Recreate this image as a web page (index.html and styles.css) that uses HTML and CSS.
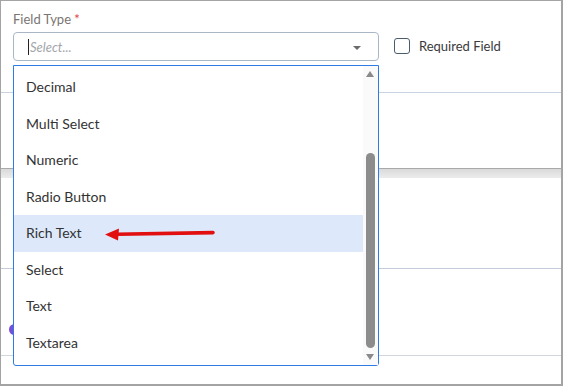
FILE: index.html
```html
<!doctype html>
<html lang="en">
<head>
    <meta charset="UTF-8">
    <title>Field Type</title>
    <link rel="stylesheet" href="styles.css">
</head>
<body>
    <div class="frame">
        <div class="field">
            <label class="label">Field Type <span class="req">*</span></label>
            <div class="row">
                <div class="select">
                    <span class="cursor"></span>
                    <span class="placeholder">Select...</span>
                    <span class="caret"></span>
                </div>
                <label class="check">
                    <span class="box"></span>
                    <span>Required Field</span>
                </label>
            </div>
        </div>
        <div class="section s1"></div>
        <div class="band"></div>
        <div class="section s2"></div>
        <div class="section s3"><span class="dot"></span></div>
        <div class="section s4"></div>

        <!-- open dropdown -->
        <div class="menu">
            <ul class="list">
                <li>Decimal</li>
                <li>Multi Select</li>
                <li>Numeric</li>
                <li>Radio Button</li>
                <li class="active">Rich Text</li>
                <li>Select</li>
                <li>Text</li>
                <li>Textarea</li>
            </ul>
            <div class="scroll">
                <span class="up"></span>
                <span class="thumb"></span>
                <span class="down"></span>
            </div>
        </div>

        <svg class="arrow" width="130" height="20" viewBox="0 0 130 20">
            <path d="M14 11.3 L110 9.6" stroke="#e10f0f" stroke-width="3.6" stroke-linecap="round" fill="none"/>
            <path d="M2 11.6 L16 5.5 L15 17.5 Z" fill="#e10f0f"/>
        </svg>
    </div>
</body>
</html>
```

FILE: styles.css
```css
* {
    margin: 0;
    padding: 0;
    box-sizing: border-box;
}
body {
    background: #fff;
    font-family: Lato, "Open Sans", sans-serif;
    color: #333;
}
.frame {
    position: relative;
    width: 563px;
    height: 386px;
    border: 1px solid #a4a4a4;
    border-right-width: 2px;
    border-bottom-width: 2px;
    overflow: hidden;
}
.field {
    height: 92px;
    padding: 10px 12px 0;
    border-bottom: 1px solid #c9d3df;
}
.label {
    display: block;
    font-size: 13px;
    line-height: 16px;
    color: #7a7572;
}
.req {
    color: #e0413b;
}
.row {
    display: flex;
    align-items: center;
    margin-top: 5px;
}
.select {
    position: relative;
    display: flex;
    align-items: center;
    width: 366px;
    height: 29px;
    border: 1px solid #a9b6c6;
    border-radius: 4px;
    padding-left: 14px;
}
.cursor {
    width: 1px;
    height: 16px;
    background: #222;
    margin-right: 1px;
}
.placeholder {
    font-size: 13px;
    font-style: italic;
    color: #a3a6aa;
}
.caret {
    position: absolute;
    right: 17px;
    top: 13px;
    border-left: 4px solid transparent;
    border-right: 4px solid transparent;
    border-top: 4px solid #6b6b6b;
}
.check {
    display: flex;
    align-items: center;
    gap: 9px;
    margin-left: 15px;
    margin-top: -2px;
    font-size: 13px;
    color: #3a3a3a;
}
.box {
    width: 16px;
    height: 16px;
    border: 1.5px solid #4b5d6c;
    border-radius: 3px;
}
.section {
    position: relative;
    border-bottom: 1px solid #c3ccd8;
}
.s1 {
    height: 76px;
    border-bottom-color: #a9a9a9;
}
.band {
    height: 9px;
    background: linear-gradient(#dadada, #ececec);
}
.s2 {
    height: 91px;
}
.s3 {
    height: 87px;
    border-bottom-color: #d2d6de;
}
.dot {
    position: absolute;
    left: 8px;
    top: 55px;
    width: 11px;
    height: 11px;
    border-radius: 50%;
    background: #7a4fd8;
}
.s4 {
    height: 28px;
    border-bottom: none;
}
.menu {
    position: absolute;
    left: 12px;
    top: 64px;
    width: 366px;
    height: 301px;
    display: flex;
    background: #fff;
    border: 1px solid #2f7be6;
    border-radius: 0 0 3px 3px;
}
.list {
    flex: 1;
    list-style: none;
    padding-top: 3px;
}
.list li {
    height: 36.5px;
    line-height: 36.5px;
    padding-left: 12px;
    font-size: 14px;
    color: #333;
}
.list li.active {
    background: #dde9fb;
}
.scroll {
    position: relative;
    width: 15px;
    background: #fafafa;
}
.up, .down {
    position: absolute;
    left: 3px;
    border-left: 4.5px solid transparent;
    border-right: 4.5px solid transparent;
}
.up {
    top: 5px;
    border-bottom: 6px solid #8a8a8a;
}
.down {
    bottom: 5px;
    border-top: 6px solid #8a8a8a;
}
.thumb {
    position: absolute;
    left: 3px;
    top: 87px;
    width: 9px;
    height: 195px;
    border-radius: 5px;
    background: #8c8c8c;
}
.arrow {
    position: absolute;
    left: 102px;
    top: 222px;
}
```
